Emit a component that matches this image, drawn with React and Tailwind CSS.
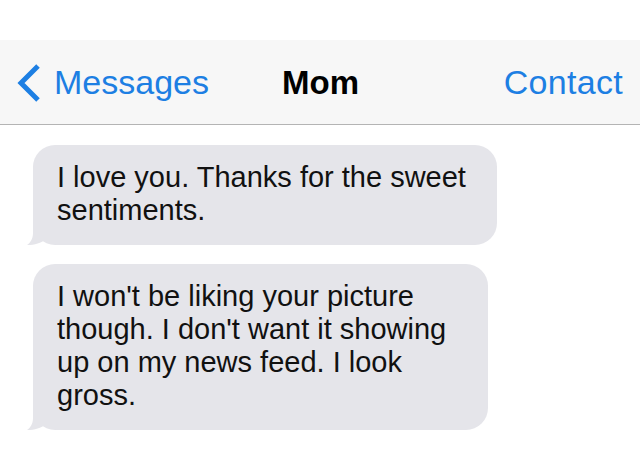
export default function App() {
  const font = { fontFamily: '"Liberation Sans", Arial, sans-serif' };

  const Bubble = ({ children, width }) => (
    <div className="relative pl-[33px]">
      <div
        className={`relative ${width} rounded-[22px] bg-[#e5e5ea] pl-[24px] pr-4 pt-[16px] pb-[18px] text-[29px] leading-[33px] text-[#111]`}
      >
        {children}
      </div>
      <svg
        className="absolute left-[26px] bottom-0"
        width="30"
        height="30"
        viewBox="0 0 30 30"
      >
        <path d="M7 0 L7 18 C7 24 4 28 1 30 C9 30 15 28 20 24 L30 30 L30 0 Z" fill="#e5e5ea" />
      </svg>
    </div>
  );

  return (
    <div className="w-[640px] h-[456px] bg-white overflow-hidden" style={font}>
      <div className="h-[40px] bg-white" />
      <div className="h-[85px] bg-[#f7f7f7] border-b border-[#b4b4b4] flex items-center pl-[16px] pr-[17px] pt-[1px]">
        <div className="flex items-center w-[266px] text-[#1d7fe3]">
          <svg width="26" height="38" viewBox="0 0 26 38" className="mr-[12px]">
            <path d="M22 2 L5 19 L22 36" fill="none" stroke="#1d7fe3" strokeWidth="5" strokeLinecap="butt" strokeLinejoin="miter" />
          </svg>
          <span className="text-[34px]">Messages</span>
        </div>
        <div className="text-[33px] font-bold text-black">Mom</div>
        <div className="ml-auto text-[34px] tracking-[0.3px] text-[#1d7fe3]">Contact</div>
      </div>
      <div className="flex flex-col gap-[19px] pt-[20px]">
        <Bubble width="w-[464px]">
          I love you. Thanks for the sweet
          <br />
          sentiments.
        </Bubble>
        <Bubble width="w-[455px]">
          I won't be liking your picture
          <br />
          though. I don't want it showing
          <br />
          up on my news feed. I look
          <br />
          gross.
        </Bubble>
      </div>
    </div>
  );
}
